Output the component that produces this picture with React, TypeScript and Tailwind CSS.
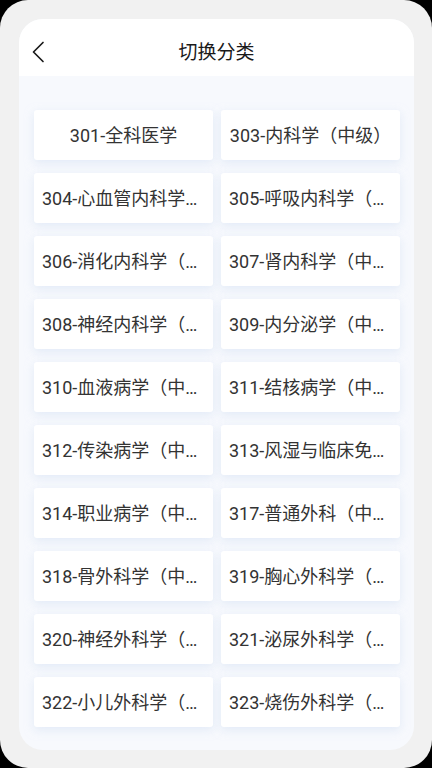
import React from "react";

const items = [
  "301-全科医学",
  "303-内科学（中级）",
  "304-心血管内科学（中级）",
  "305-呼吸内科学（中级）",
  "306-消化内科学（中级）",
  "307-肾内科学（中级）",
  "308-神经内科学（中级）",
  "309-内分泌学（中级）",
  "310-血液病学（中级）",
  "311-结核病学（中级）",
  "312-传染病学（中级）",
  "313-风湿与临床免疫学（中级）",
  "314-职业病学（中级）",
  "317-普通外科（中级）",
  "318-骨外科学（中级）",
  "319-胸心外科学（中级）",
  "320-神经外科学（中级）",
  "321-泌尿外科学（中级）",
  "322-小儿外科学（中级）",
  "323-烧伤外科学（中级）",
];

export default function App() {
  return (
    <div className="bg-black w-[432px] h-[768px] overflow-hidden">
      <div
        className="w-[432px] h-[768px] rounded-[28px] bg-[#f1f1f1] pt-[19px] pl-[19px] pr-[18px]"
        style={{ fontFamily: 'Roboto, "Noto Sans CJK SC", sans-serif' }}
      >
        <div className="h-[731px] rounded-[24px] overflow-hidden bg-[#f7f9fd] flex flex-col">
          <div className="h-[57px] bg-white flex items-center relative shrink-0">
            <svg
              className="absolute left-[10px] top-[21px]"
              width="18"
              height="24"
              viewBox="0 0 18 24"
              fill="none"
            >
              <path d="M14 2.5 L4.5 12 L14 21.5" stroke="#1a1a1a" strokeWidth="1.7" strokeLinecap="round" strokeLinejoin="round" />
            </svg>
            <div className="flex-1 text-center text-[19px] text-[#1a1a1a] leading-none pt-[10px]">切换分类</div>
          </div>
          <div className="flex-1 pt-[34px] pl-[15px] pr-[14px]">
            <div className="grid grid-cols-2 gap-x-[8px] gap-y-[13px]">
              {items.map((t) => (
                <div
                  key={t}
                  className="h-[50px] bg-white rounded-[3px] shadow-[0_3px_10px_rgba(210,222,242,0.55)] flex items-center justify-center px-[8px]"
                >
                  <span className="block w-full truncate text-center text-[18px] text-[#333333]">{t}</span>
                </div>
              ))}
            </div>
          </div>
        </div>
      </div>
    </div>
  );
}
